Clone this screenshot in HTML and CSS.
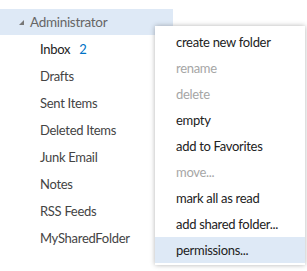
FILE: index.html
```html
<!DOCTYPE html>
<html lang="en">
<head><meta charset="UTF-8"/><meta name="viewport" content="width=device-width, initial-scale=1.0"/>
<title>Folders</title>
<link rel="stylesheet" href="styles.css">
</head><body>
<div class="app">
 <div class="pane">
  <div class="root"><span class="caret"></span>Administrator</div>
  <ul class="folders">
   <li class="unread">Inbox <span class="count">2</span></li>
   <li>Drafts</li>
   <li>Sent Items</li>
   <li>Deleted Items</li>
   <li>Junk Email</li>
   <li>Notes</li>
   <li>RSS Feeds</li>
   <li>MySharedFolder</li>
  </ul>
 </div>
 <ul class="menu">
  <li>create new folder</li>
  <li class="off">rename</li>
  <li class="off">delete</li>
  <li>empty</li>
  <li>add to Favorites</li>
  <li class="off">move...</li>
  <li>mark all as read</li>
  <li>add shared folder...</li>
  <li class="hover">permissions...</li>
 </ul>
</div>
</body></html>
```

FILE: styles.css
```css
body{margin:0;font-family:Lato,"Open Sans",sans-serif;font-size:13px;letter-spacing:-0.3px;color:#444;background:#fff;}
.app{position:relative;width:307px;height:271px;overflow:hidden;}
.pane{width:173px;padding-top:9px;}
.root{height:26px;line-height:26px;background:#dee9f6;color:#666;font-size:13.5px;display:flex;align-items:center;}
.caret{width:0;height:0;margin:0 6px 0 19px;border-left:5px solid transparent;border-bottom:5px solid #777;}
.folders{list-style:none;margin:1px 0 0;padding:0;}
.folders li{height:27px;line-height:27px;padding-left:40px;}
.folders .unread{color:#222;}
.count{color:#0072c6;margin-left:6px;}
.menu{position:absolute;left:155px;top:26px;width:150px;margin:0;padding:3px 0 2px;list-style:none;background:#fff;box-shadow:0 0 5px rgba(0,0,0,.3);}
.menu li{height:26px;line-height:26px;padding-left:21px;color:#222;}
.menu .off{color:#a6a6a6;}
.menu .hover{background:#dee9f6;}
```
